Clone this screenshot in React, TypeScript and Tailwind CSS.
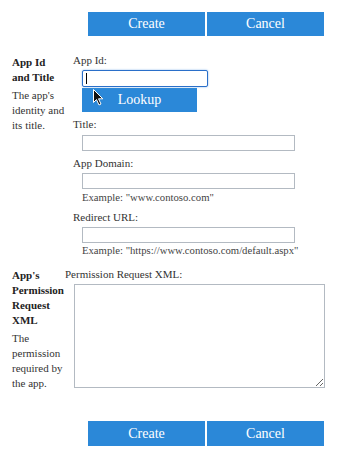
const font = "font-['Liberation_Serif','Times_New_Roman',serif]"

const btn = [
  "flex items-center justify-center",
  "bg-[#2b88d8] text-white text-[14px] leading-none",
  "w-[117px]",
].join(' ')

const label = "text-[11px] leading-[15px] text-[#333]"
const hint = "text-[10.7px] leading-[14px] text-[#444] ml-[9px]"
const field = "block h-[16px] ml-[9px] w-[213px] border border-[#b3bac2] bg-white outline-none"

function Buttons({ h }: { h: string }) {
  return (
    <div className="flex gap-[2px] pl-[88px]">
      <button className={`${btn} ${h}`}>Create</button>
      <button className={`${btn} ${h}`}>Cancel</button>
    </div>
  )
}

export default function App() {
  return (
    <div className={`${font} relative w-[353px] h-[454px] bg-white overflow-hidden`}>
      <div className="pt-[12px]">
        <Buttons h="h-[24px]" />
      </div>

      {/* App Id and Title */}
      <div className="flex items-start mt-[17px]">
        <div className="w-[73px] pl-[12px] pt-[2px] shrink-0">
          <div className="text-[11px] leading-[15px] font-bold text-[#222]">
            App Id<br />and Title
          </div>
          <div className="mt-[3px] text-[11px] leading-[15px] text-[#333]">
            The app's<br />identity and<br />its title.
          </div>
        </div>
        <div className="flex flex-col">
          <div className={label}>App Id:</div>
          <div className="relative mt-[2px] ml-[9px] w-[126px] h-[17px] rounded-[2px] border border-[#2a6fc9] shadow-[0_0_2px_#7fb0e8] bg-white">
            <span className="absolute left-[3px] top-[2px] w-px h-[11px] bg-black" />
          </div>
          <button className="mt-[1px] ml-[9px] w-[115px] h-[24px] bg-[#2b88d8] text-white text-[14px] leading-none flex items-center justify-center">
            Lookup
          </button>

          <div className={`${label} mt-[5px]`}>Title:</div>
          <input className={`${field} mt-[3px]`} />

          <div className={`${label} mt-[5px]`}>App Domain:</div>
          <input className={`${field} mt-[2px]`} />
          <div className={`${hint} mt-[1px]`}>Example: "www.contoso.com"</div>

          <div className={`${label} mt-[6px]`}>Redirect URL:</div>
          <input className={`${field} mt-[2px]`} />
          <div className={hint}>Example: "https://www.contoso.com/default.aspx"</div>
        </div>
      </div>

      {/* Permission Request XML */}
      <div className="flex items-start mt-[10px]">
        <div className="w-[65px] pl-[12px] pt-[1px] shrink-0">
          <div className="text-[11px] leading-[15px] font-bold text-[#222]">
            App's<br />Permission<br />Request<br />XML
          </div>
          <div className="mt-[3px] text-[11px] leading-[15px] text-[#333]">
            The<br />permission<br />required by<br />the app.
          </div>
        </div>
        <div className="flex flex-col">
          <div className={label}>Permission Request XML:</div>
          <textarea className="mt-[2px] ml-[9px] w-[251px] h-[104px] border border-[#b3bac2] bg-white outline-none" />
        </div>
      </div>

      <div className="mt-[30px]">
        <Buttons h="h-[25px]" />
      </div>

      {/* mouse pointer over Lookup */}
      <svg className="absolute left-[93px] top-[89px]" width="11" height="17" viewBox="0 0 11 17">
        <path d="M0.5 0.5 L0.5 13.5 L3.5 10.5 L6 16 L8 15 L5.5 9.8 L9.8 9.8 Z" fill="#111" stroke="#fff" strokeWidth="1" />
      </svg>
    </div>
  )
}
